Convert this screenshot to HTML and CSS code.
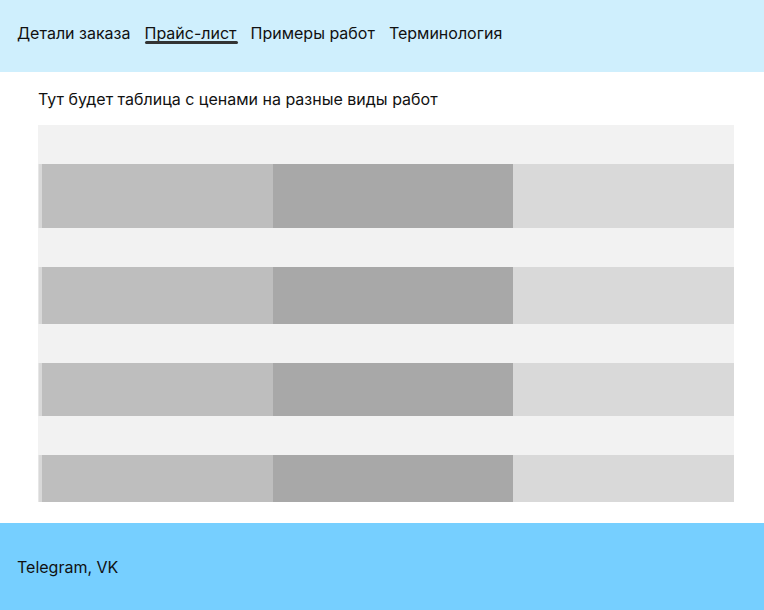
FILE: index.html
```html
<!DOCTYPE html>
<html lang="ru">
<head>
<meta charset="utf-8">
<link rel="stylesheet" href="styles.css">
</head>
<body>
<header class="header">
  <nav class="nav">
    <a class="nav-link">Детали заказа</a>
    <a class="nav-link active">Прайс-лист</a>
    <a class="nav-link">Примеры работ</a>
    <a class="nav-link">Терминология</a>
  </nav>
</header>
<main class="main">
  <p class="intro">Тут будет таблица с ценами на разные виды работ</p>
  <div class="table">
    <div class="row light"></div>
    <div class="row dark h64"><span class="c0"></span><span class="c1"></span><span class="c2"></span><span class="c3"></span></div>
    <div class="row light"></div>
    <div class="row dark h57"><span class="c0"></span><span class="c1"></span><span class="c2"></span><span class="c3"></span></div>
    <div class="row light"></div>
    <div class="row dark h53"><span class="c0"></span><span class="c1"></span><span class="c2"></span><span class="c3"></span></div>
    <div class="row light"></div>
    <div class="row dark h47"><span class="c0"></span><span class="c1"></span><span class="c2"></span><span class="c3"></span></div>
  </div>
</main>
<footer class="footer">Telegram, VK</footer>
</body>
</html>
```
FILE: styles.css
```css
* { box-sizing: border-box; }
html, body { margin: 0; padding: 0; }
body {
  font-family: Inter, "Noto Sans", sans-serif;
  color: #111;
  width: 764px;
}
.header {
  height: 72px;
  background: #cfeffd;
  padding: 23px 0 0 17px;
}
.nav {
  display: flex;
  gap: 14px;
  font-size: 16px;
  line-height: 20px;
}
.nav-link { position: relative; color: #111; }
.nav-link.active::after {
  content: "";
  position: absolute;
  left: 1px;
  right: -1px;
  top: 18px;
  height: 3px;
  border-radius: 2px;
  background: #333;
}
.main {
  height: 451px;
  padding: 0 30px 0 38px;
  overflow: hidden;
}
.intro {
  margin: 0;
  padding-top: 17px;
  font-size: 16px;
  line-height: 20px;
  height: 53px;
}
.table { width: 696px; }
.row { display: flex; }
.light { height: 39px; background: #f2f2f2; }
.h64 { height: 64px; }
.h57 { height: 57px; }
.h53 { height: 53px; }
.h47 { height: 47px; }
.c0 { width: 4px; background: #d8d8d8; border-left: 1px solid #e6e6e6; }
.c1 { width: 231px; background: #bebebe; }
.c2 { width: 240px; background: #a8a8a8; }
.c3 { flex: 1; background: #d9d9d9; }
.footer {
  height: 87px;
  background: #76cfff;
  padding: 34px 0 0 17px;
  font-size: 16px;
  line-height: 20px;
}
```
